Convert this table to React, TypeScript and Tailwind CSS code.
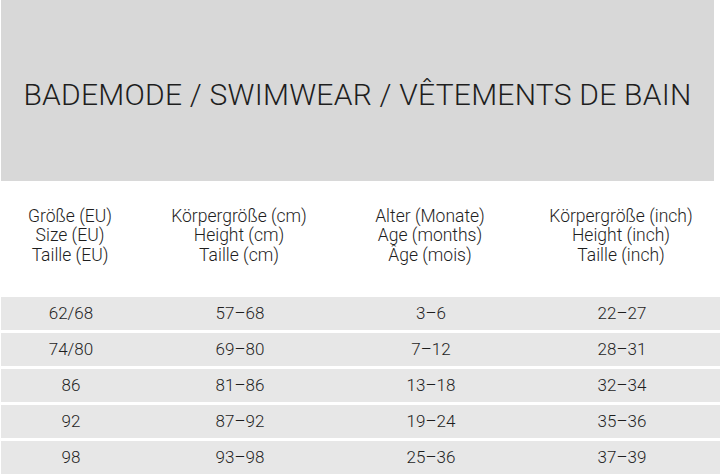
export default function App() {
  const headers = [
    ["Größe (EU)", "Size (EU)", "Taille (EU)"],
    ["Körpergröße (cm)", "Height (cm)", "Taille (cm)"],
    ["Alter (Monate)", "Age (months)", "Âge (mois)"],
    ["Körpergröße (inch)", "Height (inch)", "Taille (inch)"],
  ];
  const rows = [
    ["62/68", "57–68", "3–6", "22–27"],
    ["74/80", "69–80", "7–12", "28–31"],
    ["86", "81–86", "13–18", "32–34"],
    ["92", "87–92", "19–24", "35–36"],
    ["98", "93–98", "25–36", "37–39"],
  ];
  const cols = "grid grid-cols-[140px_198px_184px_198px]";
  return (
    <div className="w-[720px] h-[474px] overflow-hidden bg-white text-[#1e1e1e] font-['Roboto',sans-serif]">
      <div className="mr-[6px] ml-[1px] h-[181px] bg-[#d8d8d8] flex items-center justify-center pt-[8px]">
        <h1 className="text-[30px] font-light tracking-[0.25px] whitespace-nowrap">
          BADEMODE / SWIMWEAR / VÊTEMENTS DE BAIN
        </h1>
      </div>
      <div className={`${cols} h-[116px] items-center pb-[6px] text-[17.5px] leading-[19.5px] font-light`}>
        {headers.map((h, i) => (
          <div key={i} className="flex flex-col items-center text-center">
            {h.map((t) => (
              <span key={t} className="whitespace-nowrap">{t}</span>
            ))}
          </div>
        ))}
      </div>
      <div className="flex flex-col gap-[3px] ml-[1px]">
        {rows.map((r, i) => (
          <div key={i} className={`${cols} h-[33px] items-center bg-[#e7e7e7] text-[17px] font-light`}>
            {r.map((c, j) => (
              <div key={j} className="text-center whitespace-nowrap">{c}</div>
            ))}
          </div>
        ))}
      </div>
    </div>
  );
}
